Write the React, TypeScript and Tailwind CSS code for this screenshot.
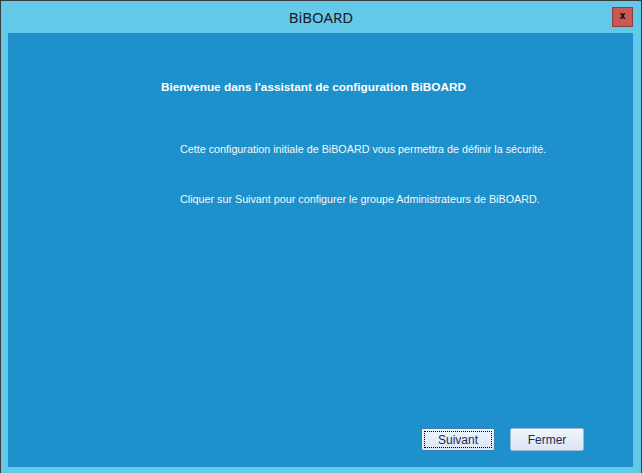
export default function App() {
  return (
    <div className="flex h-[473px] w-[642px] flex-col border-x border-t border-[#3a3a3a] bg-[#64c8e9] font-['Liberation_Sans',sans-serif]">
      {/* Title bar */}
      <div className="relative flex h-[32px] shrink-0 items-center justify-center">
        <span className="font-['Noto_Sans',sans-serif] text-[15px] text-[#1b1b1b]">BiBOARD</span>
        <button className="absolute right-[8px] top-[6px] flex h-[20px] w-[21px] items-center justify-center border border-[#8e3d3d] bg-[#c75a52] pb-[2px] text-[10px] font-bold leading-none text-black">
          x
        </button>
      </div>

      {/* Content panel */}
      <div className="mb-[6px] ml-[7px] mr-[8px] flex flex-1 flex-col bg-[#1e90cc] text-white">
        <h1 className="ml-[153px] mt-[47px] text-[11.8px] font-bold leading-[14px]">
          Bienvenue dans l'assistant de configuration BiBOARD
        </h1>
        <p className="ml-[172px] mt-[48px] text-[10.75px] leading-[14px] text-[#f4f8fb]">
          Cette configuration initiale de BiBOARD vous permettra de définir la sécurité.
        </p>
        <p className="ml-[172px] mt-[36px] text-[10.75px] leading-[14px] text-[#f4f8fb]">
          Cliquer sur Suivant pour configurer le groupe Administrateurs de BiBOARD.
        </p>

        <div className="mb-[16px] mr-[49px] mt-auto flex justify-end gap-[15px]">
          <button className="flex h-[23px] w-[74px] items-center justify-center rounded-[2px] border border-[#3c7fb1] bg-gradient-to-b from-[#f2f6fc] to-[#d9e5f4] p-[2px] text-[12px] text-[#1d2b4d]">
            <span className="flex h-full w-full items-center justify-center border border-dotted border-black">
              Suivant
            </span>
          </button>
          <button className="flex h-[23px] w-[74px] items-center justify-center rounded-[2px] border border-[#9fb8d6] bg-gradient-to-b from-[#f2f6fc] to-[#d9e5f4] text-[12px] text-[#1d2b4d]">
            Fermer
          </button>
        </div>
      </div>
    </div>
  );
}
